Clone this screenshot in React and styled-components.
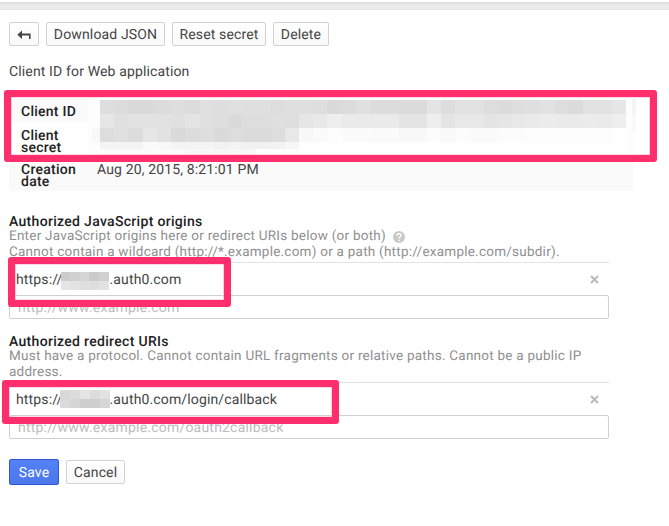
import React from "react";
import styled, { createGlobalStyle, css } from "styled-components";

const GlobalStyle = createGlobalStyle`
  * { box-sizing: border-box; }
  html, body { margin: 0; background: #fff; }
  body {
    font-family: Roboto, "Liberation Sans", sans-serif;
    font-size: 14px;
    line-height: 16px;
    letter-spacing: 0.14px;
    text-rendering: geometricPrecision;
    color: #444;
    overflow: hidden;
  }
`;

const Page = styled.main`
  position: relative;
  width: 669px;
  height: 526px;
  overflow: hidden;
`;

const TopBand = styled.div`
  height: 8px;
  margin-top: 2px;
  background: linear-gradient(#d9d9d9 0, #e6e6e6 2px, #ebebeb 4px, #ebebeb 7px, #e3e3e3 8px);
`;

const Content = styled.div`
  padding: 12px 0 0 9px;
`;

const Toolbar = styled.div`
  display: flex;
  align-items: center;
  gap: 7px;
  height: 24px;
`;

const Button = styled.button`
  display: flex;
  align-items: center;
  justify-content: center;
  width: ${(p) => p.$width}px;
  height: 24px;
  padding: 2px 0 0;
  border: 1px solid #d2d2d2;
  border-radius: 2px;
  background: linear-gradient(#fff, #f9f9f9);
  color: #444;
  font: inherit;
  letter-spacing: inherit;
  text-rendering: inherit;
  white-space: nowrap;
  ${(p) =>
    p.$primary &&
    css`
      height: 26px;
      border-color: #3058d5;
      background: linear-gradient(#5581f8, #4b77ea);
      color: #fff;
    `}
`;

const Title = styled.div`
  margin-top: 18px;
`;

const Details = styled.dl`
  width: 624px;
  margin: 18px 0 0;
`;

const DetailRow = styled.div`
  display: grid;
  grid-template-columns: 76px 1fr;
  height: ${(p) => p.$height}px;
  padding: ${(p) => p.$top}px 0 0 12px;
  background: ${(p) => (p.$shaded ? "#fafafa" : "#fff")};
`;

const DetailLabel = styled.dt`
  width: 60px;
  font-weight: 500;
  line-height: 12px;
  letter-spacing: 0.25px;
  color: #222;
`;

const DetailValue = styled.dd`
  margin: 0;
  line-height: 12px;
`;

const Section = styled.section`
  width: 600px;
  height: ${(p) => p.$height}px;
  margin-top: ${(p) => p.$gap}px;
`;

const SectionTitle = styled.h2`
  margin: 0;
  font-size: inherit;
  line-height: 15px;
  font-weight: 500;
  letter-spacing: 0.31px;
  color: #222;
`;

const Hint = styled.div`
  height: 33px;
  margin-top: -1px;
  font-size: 13.5px;
  letter-spacing: 0.24px;
  color: #8f8f8f;
  white-space: nowrap;
  line-height: 15.5px;
`;

const HelpIcon = styled.svg`
  display: inline-block;
  height: 12px;
  margin: -2px 0 -2px 3px;
  vertical-align: -1px;
`;

const UriRow = styled.div`
  display: flex;
  align-items: center;
  height: 33px;
  padding: 2px 10px 0 7px;
  border-top: 1px solid #e3e3e3;
`;

const Suffix = styled.span`
  flex: 1;
`;

const RemoveMark = styled.svg`
  margin-top: -2px;
`;

const UriInput = styled.input`
  display: block;
  width: 600px;
  height: 24px;
  padding: 2px 8px 0;
  border: 1px solid #d0d0d0;
  border-radius: 2px;
  outline: 0;
  background: #fff;
  font: inherit;
  letter-spacing: 0.21px;
  text-rendering: inherit;
  &::placeholder { color: #bdbdbd; opacity: 1; }
`;

const Actions = styled.div`
  display: flex;
  align-items: center;
  gap: 7px;
  margin-top: 20px;
`;

const Mosaic = styled.div`
  display: grid;
  flex: none;
  grid-template-columns: repeat(${(p) => p.$cols}, 1fr);
  grid-template-rows: ${(p) => p.$rows};
  width: ${(p) => p.$width}px;
  margin: ${(p) => p.$margin || "0"};
`;

const Tile = styled.span`
  background: ${(p) => p.$color};
`;

const SecretCover = styled.div`
  position: absolute;
  left: 88px;
  top: 97px;
  width: 548px;
  height: 58px;
  padding: 3px 10px 0 12px;
  background: linear-gradient(#f5f5f5, #f5f5f5) 544px 2px / 4px 16px no-repeat,
    linear-gradient(#f9f9f9, #f9f9f9) 544px 18px / 4px 16px no-repeat,
    linear-gradient(#f8f8f8, #f8f8f8) 4px 31px / 8px 14px no-repeat,
    #fdfdfd;
`;

const Marker = styled.div`
  position: absolute;
  left: ${(p) => p.$x}px;
  top: ${(p) => p.$y}px;
  width: ${(p) => p.$w}px;
  height: ${(p) => p.$h}px;
  border: 7px solid #ff2f6d;
  border-radius: 3px;
  box-shadow: inset 0 0 0 0.6px #ffb6cc;
  pointer-events: none;
`;

const secretTiles = [
  "de dc da da dc de dc e0 de e0 df df dd df df de da dc e0 dc dc db db e4 dd e2 e2 dd db de df e2 dd db e2 e2 e6",
  "e6 e0 e2 e2 e2 e0 e4 e0 de da dd dd df de e6 e8 ee ea ea ea ea e4 e4 ee e4 e8 e8 e4 e6 e8 ea ec ea ea ec ea ee",
  "dd e0 dc e6 e2 da dc de da dd db db dd e8 f8 fa fd fb fb fa fa f8 f8 fc f9 fc fa fa fc fc fd fd fd fd fd fd fe",
  "f4 f4 f4 fa f8 f4 f4 f4 f1 f3 f1 f1 f2 f6 fe fe fe fe fe fe fe fe fe fe fe fe fe fe fe fe fe fe fe fe fe fe fe",
  "fb fb fb fb fb fa f8 f8 f6 f7 f7 fe fe fe fe fe fe fe fe fe fe fe fe fe fe fe fe fe fe fe fe fe fe fe fe fe fe",
].join(" ").split(" ");

const originTiles = "cc d0 d6 ca d0 e6 e2 de de e2".split(" ");
const redirectTiles = "d8 dc e4 dc e2 da d6 ce ce d6".split(" ");

function Tiles({ values, ...rest }) {
  return (
    <Mosaic {...rest}>
      {values.map((v, i) => (
        <Tile key={i} $color={`#${v}${v}${v}`} />
      ))}
    </Mosaic>
  );
}

function BackIcon() {
  return (
    <svg width="14" height="10" viewBox="0 0 14 10">
      <path d="M5 0.5V3.6H13.6V9H12V5.6H5V9L0.3 4.7Z" fill="#444" />
    </svg>
  );
}

function RemoveIcon() {
  return (
    <RemoveMark width="9" height="9" viewBox="0 0 9 9">
      <path d="M1 1L8 8M8 1L1 8" stroke="#bbb" strokeWidth="2.2" />
    </RemoveMark>
  );
}

function Help() {
  return (
    <HelpIcon width="12" height="12" viewBox="0 0 12 12">
      <circle cx="6" cy="6" r="6" fill="#c9c9c9" />
      <path d="M4 4.6C4 2.1 8 2.1 8 4.6C8 6 6.1 6 6.1 7.5" fill="none" stroke="#fff" strokeWidth="1.4" />
      <circle cx="6.1" cy="9.3" r="0.9" fill="#fff" />
    </HelpIcon>
  );
}

export default function App() {
  return (
    <>
      <GlobalStyle />
      <Page>
        <TopBand />
        <Content>
          <Toolbar>
            <Button $width={30} aria-label="Back"><BackIcon /></Button>
            <Button $width={119}>Download JSON</Button>
            <Button $width={94}>Reset secret</Button>
            <Button $width={56}>Delete</Button>
          </Toolbar>
          <Title>Client ID for Web application</Title>
          <Details>
            <DetailRow $height={24} $top={8} $shaded>
              <DetailLabel>Client ID</DetailLabel>
            </DetailRow>
            <DetailRow $height={35} $top={8}>
              <DetailLabel>Client secret</DetailLabel>
            </DetailRow>
            <DetailRow $height={34} $top={7} $shaded>
              <DetailLabel>Creation date</DetailLabel>
              <DetailValue>Aug 20, 2015, 8:21:01 PM</DetailValue>
            </DetailRow>
          </Details>
          <Section $height={104} $gap={24}>
            <SectionTitle>Authorized JavaScript origins</SectionTitle>
            <Hint>
              Enter JavaScript origins here or redirect URIs below (or both) <Help />
              <br />
              Cannot contain a wildcard (http://*.example.com) or a path (http://example.com/subdir).
            </Hint>
            <UriRow>
              https://
              <Tiles values={originTiles} $cols={5} $rows="9px 9px" $width={48} $margin="1px 1px 0 -2px" />
              <Suffix>.auth0.com</Suffix>
              <RemoveIcon />
            </UriRow>
            <UriInput placeholder="http://www.example.com" />
          </Section>
          <Section $height={104} $gap={16}>
            <SectionTitle>Authorized redirect URIs</SectionTitle>
            <Hint>
              Must have a protocol. Cannot contain URL fragments or relative paths. Cannot be a public IP
              <br />
              address.
            </Hint>
            <UriRow>
              https://
              <Tiles values={redirectTiles} $cols={5} $rows="9px 9px" $width={51} $margin="-2px -1px 0 -3px" />
              <Suffix>.auth0.com/login/callback</Suffix>
              <RemoveIcon />
            </UriRow>
            <UriInput placeholder="http://www.example.com/oauth2callback" />
          </Section>
          <Actions>
            <Button $width={50} $primary>Save</Button>
            <Button $width={59}>Cancel</Button>
          </Actions>
        </Content>
        <SecretCover>
          <Tiles values={secretTiles} $cols={37} $rows="14px 14px 14px 7px 6px" $width={526} />
        </SecretCover>
        <Marker $x={4} $y={90} $w={653} $h={72} />
        <Marker $x={8} $y={257} $w={223} $h={50} />
        <Marker $x={2} $y={380} $w={337} $h={44} />
      </Page>
    </>
  );
}
